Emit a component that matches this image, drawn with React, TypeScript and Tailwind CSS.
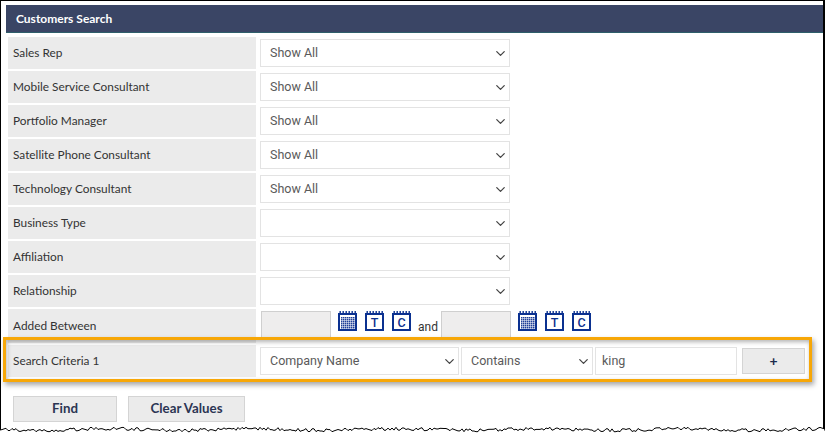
import { ChevronDown } from "lucide-react";

const rows: { label: string; value: string }[] = [
  { label: "Sales Rep", value: "Show All" },
  { label: "Mobile Service Consultant", value: "Show All" },
  { label: "Portfolio Manager", value: "Show All" },
  { label: "Satellite Phone Consultant", value: "Show All" },
  { label: "Technology Consultant", value: "Show All" },
  { label: "Business Type", value: "" },
  { label: "Affiliation", value: "" },
  { label: "Relationship", value: "" },
];

function Select({ value, width }: { value: string; width: string }) {
  return (
    <div className={`${width} h-[28px] bg-white border border-[#e3e3e3] flex items-center justify-between pl-[9px] pr-[1px] text-[12.5px] text-[#5a5a5a] font-['Roboto',sans-serif]`}>
      <span>{value}</span>
      <ChevronDown size={15} strokeWidth={2} className="text-[#444]" />
    </div>
  );
}

function Label({ text, height = "h-[32px]" }: { text: string; height?: string }) {
  return (
    <div className={`w-[248px] ${height} bg-[#ebebeb] flex items-center pl-[5px] text-[11.85px] text-[#333] font-['Lato',sans-serif]`}>
      {text}
    </div>
  );
}

function CalIcon({ letter }: { letter?: string }) {
  return (
    <svg width="19" height="20" viewBox="0 0 19 20" className="block shrink-0">
      <rect x="1" y="3" width="17" height="16" fill="#fff" stroke="#0b3190" strokeWidth="2" />
      {[2, 5, 8, 11, 14, 17].map((x) => (
        <rect key={x} x={x - 0.5} y="0" width="1.4" height="3" fill="#0b3190" />
      ))}
      {letter ? (
        <text x="9.5" y="16" textAnchor="middle" fontSize="12.5" fontWeight="500" fill="#0b3190" fontFamily="Roboto, sans-serif">
          {letter}
        </text>
      ) : (
        [6, 8, 10, 12, 14, 16].map((y) =>
          [3, 5, 7, 9, 11, 13, 15].map((x) => (
            <rect key={`${x}-${y}`} x={x} y={y} width="1.5" height="1.5" fill="#1f3f98" />
          ))
        )
      )}
    </svg>
  );
}

function DateGroup() {
  return (
    <div className="flex gap-[8px]">
      <CalIcon />
      <CalIcon letter="T" />
      <CalIcon letter="C" />
    </div>
  );
}

// rough torn paper edge along the bottom of the screenshot
function tornEdge() {
  let d = "M0 430";
  let seed = 7;
  for (let x = 2; x <= 825; x += 2) {
    seed = (seed * 73 + 41) % 1009;
    const y = 429.5 + ((seed % 5) - 2) * 0.7 + Math.sin(x / 23) * 0.8;
    d += ` L${x} ${y.toFixed(1)}`;
  }
  return d;
}

export default function App() {
  return (
    <div className="relative w-[826px] h-[435px] overflow-hidden bg-white">
      <div className="h-[431px] w-[825px] border-t border-l border-r-2 border-black pt-[4px] pl-[5px]">
        <div className="h-[28px] bg-[#3a4565] border-b border-[#2f5f6b] flex items-center pl-[10px] pt-[1px] text-[12px] font-bold text-white font-['Lato',sans-serif]">
          Customers Search
        </div>

        <div className="pl-[2px] pt-[4px] flex flex-col gap-[2px]">
          {rows.map((r) => (
            <div key={r.label} className="flex items-center gap-[4px]">
              <Label text={r.label} />
              <Select value={r.value} width="w-[250px]" />
            </div>
          ))}

          <div className="flex items-start gap-[5px] h-[34px]">
            <Label text="Added Between" height="h-[34px]" />
            <div className="flex items-start pt-[2px]">
              <div className="w-[70px] h-[28px] bg-[#eeeded] border border-[#cfcfcf]" />
              <div className="ml-[7px]">
                <DateGroup />
              </div>
              <span className="ml-[7px] mt-[7px] text-[12px] text-[#333] font-['Roboto',sans-serif]">and</span>
              <div className="ml-[3px] w-[70px] h-[28px] bg-[#eeeded] border border-[#cfcfcf]" />
              <div className="ml-[7px]">
                <DateGroup />
              </div>
            </div>
          </div>

          <div className="flex items-center gap-[4px]">
            <Label text="Search Criteria 1" />
            <Select value="Company Name" width="w-[199px]" />
            <div className="ml-[-2px]">
              <Select value="Contains" width="w-[132px]" />
            </div>
            <div className="ml-[-2px] w-[142px] h-[28px] bg-white border border-[#e3e3e3] flex items-center pl-[6px] text-[12.5px] text-[#5a5a5a] font-['Roboto',sans-serif]">
              king
            </div>
            <div className="ml-[1px] w-[63px] h-[26px] bg-[#ebebeb] border border-[#d4d4d4] flex items-center justify-center pb-[1px] text-[14px] text-[#1c2b4d] font-['Lato',sans-serif] font-bold">
              +
            </div>
          </div>

          <div className="flex gap-[11px] pl-[5px] mt-[17px]">
            <div className="w-[104px] h-[26px] bg-[#ebebeb] border border-[#d4d4d4] flex items-center justify-center text-[13.3px] font-bold text-[#2b3553] font-['Lato',sans-serif]">
              Find
            </div>
            <div className="w-[117px] h-[26px] bg-[#ebebeb] border border-[#d4d4d4] flex items-center justify-center text-[13.3px] font-bold text-[#2b3553] font-['Lato',sans-serif]">
              Clear Values
            </div>
          </div>
        </div>
      </div>

      {/* callout box over the criteria row */}
      <div className="absolute left-[3px] top-[337px] w-[809px] h-[45px] border-[3px] border-[#f7a707] shadow-[2px_3px_5px_rgba(0,0,0,0.35),inset_1px_2px_4px_rgba(0,0,0,0.3)]" />

      {/* torn bottom edge */}
      <svg width="826" height="435" viewBox="0 0 826 435" className="absolute left-0 top-0 pointer-events-none">
        <path d={`${tornEdge()} L826 435 L0 435 Z`} fill="#fff" stroke="none" />
        <path d={tornEdge()} fill="none" stroke="#000" strokeWidth="1" />
      </svg>
    </div>
  );
}
